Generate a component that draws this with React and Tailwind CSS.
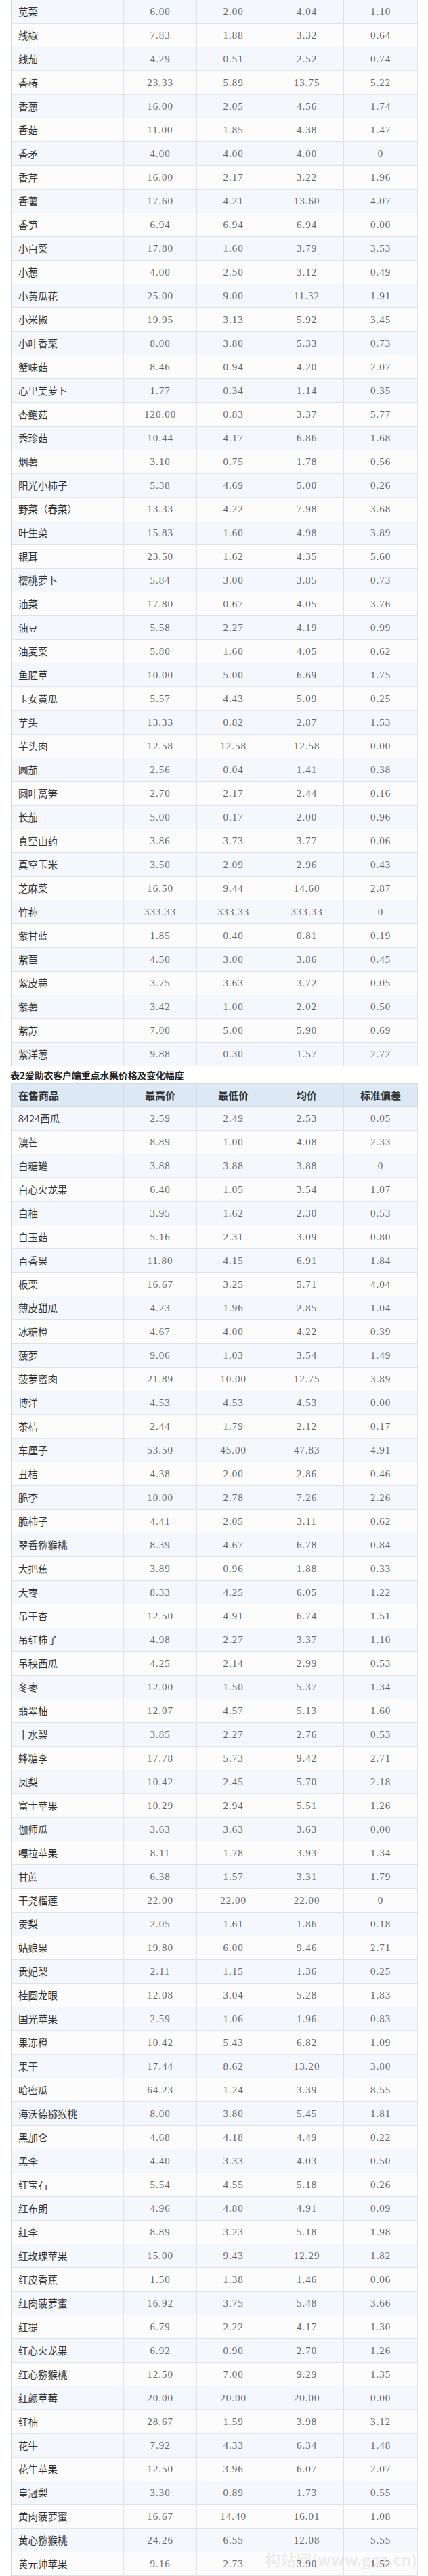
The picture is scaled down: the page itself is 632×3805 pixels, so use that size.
import React from "react";

const vegetables = [
  ["苋菜", "6.00", "2.00", "4.04", "1.10"],
  ["线椒", "7.83", "1.88", "3.32", "0.64"],
  ["线茄", "4.29", "0.51", "2.52", "0.74"],
  ["香椿", "23.33", "5.89", "13.75", "5.22"],
  ["香葱", "16.00", "2.05", "4.56", "1.74"],
  ["香菇", "11.00", "1.85", "4.38", "1.47"],
  ["香矛", "4.00", "4.00", "4.00", "0"],
  ["香芹", "16.00", "2.17", "3.22", "1.96"],
  ["香薯", "17.60", "4.21", "13.60", "4.07"],
  ["香笋", "6.94", "6.94", "6.94", "0.00"],
  ["小白菜", "17.80", "1.60", "3.79", "3.53"],
  ["小葱", "4.00", "2.50", "3.12", "0.49"],
  ["小黄瓜花", "25.00", "9.00", "11.32", "1.91"],
  ["小米椒", "19.95", "3.13", "5.92", "3.45"],
  ["小叶香菜", "8.00", "3.80", "5.33", "0.73"],
  ["蟹味菇", "8.46", "0.94", "4.20", "2.07"],
  ["心里美萝卜", "1.77", "0.34", "1.14", "0.35"],
  ["杏鲍菇", "120.00", "0.83", "3.37", "5.77"],
  ["秀珍菇", "10.44", "4.17", "6.86", "1.68"],
  ["烟薯", "3.10", "0.75", "1.78", "0.56"],
  ["阳光小柿子", "5.38", "4.69", "5.00", "0.26"],
  ["野菜（春菜）", "13.33", "4.22", "7.98", "3.68"],
  ["叶生菜", "15.83", "1.60", "4.98", "3.89"],
  ["银耳", "23.50", "1.62", "4.35", "5.60"],
  ["樱桃萝卜", "5.84", "3.00", "3.85", "0.73"],
  ["油菜", "17.80", "0.67", "4.05", "3.76"],
  ["油豆", "5.58", "2.27", "4.19", "0.99"],
  ["油麦菜", "5.80", "1.60", "4.05", "0.62"],
  ["鱼腥草", "10.00", "5.00", "6.69", "1.75"],
  ["玉女黄瓜", "5.57", "4.43", "5.09", "0.25"],
  ["芋头", "13.33", "0.82", "2.87", "1.53"],
  ["芋头肉", "12.58", "12.58", "12.58", "0.00"],
  ["圆茄", "2.56", "0.04", "1.41", "0.38"],
  ["圆叶莴笋", "2.70", "2.17", "2.44", "0.16"],
  ["长茄", "5.00", "0.17", "2.00", "0.96"],
  ["真空山药", "3.86", "3.73", "3.77", "0.06"],
  ["真空玉米", "3.50", "2.09", "2.96", "0.43"],
  ["芝麻菜", "16.50", "9.44", "14.60", "2.87"],
  ["竹荪", "333.33", "333.33", "333.33", "0"],
  ["紫甘蓝", "1.85", "0.40", "0.81", "0.19"],
  ["紫苣", "4.50", "3.00", "3.86", "0.45"],
  ["紫皮蒜", "3.75", "3.63", "3.72", "0.05"],
  ["紫薯", "3.42", "1.00", "2.02", "0.50"],
  ["紫苏", "7.00", "5.00", "5.90", "0.69"],
  ["紫洋葱", "9.88", "0.30", "1.57", "2.72"],
];

const fruits = [
  ["8424西瓜", "2.59", "2.49", "2.53", "0.05"],
  ["澳芒", "8.89", "1.00", "4.08", "2.33"],
  ["白糖罐", "3.88", "3.88", "3.88", "0"],
  ["白心火龙果", "6.40", "1.05", "3.54", "1.07"],
  ["白柚", "3.95", "1.62", "2.30", "0.53"],
  ["白玉菇", "5.16", "2.31", "3.09", "0.80"],
  ["百香果", "11.80", "4.15", "6.91", "1.84"],
  ["板栗", "16.67", "3.25", "5.71", "4.04"],
  ["薄皮甜瓜", "4.23", "1.96", "2.85", "1.04"],
  ["冰糖橙", "4.67", "4.00", "4.22", "0.39"],
  ["菠萝", "9.06", "1.03", "3.54", "1.49"],
  ["菠萝蜜肉", "21.89", "10.00", "12.75", "3.89"],
  ["博洋", "4.53", "4.53", "4.53", "0.00"],
  ["茶桔", "2.44", "1.79", "2.12", "0.17"],
  ["车厘子", "53.50", "45.00", "47.83", "4.91"],
  ["丑桔", "4.38", "2.00", "2.86", "0.46"],
  ["脆李", "10.00", "2.78", "7.26", "2.26"],
  ["脆柿子", "4.41", "2.05", "3.11", "0.62"],
  ["翠香猕猴桃", "8.39", "4.67", "6.78", "0.84"],
  ["大把蕉", "3.89", "0.96", "1.88", "0.33"],
  ["大枣", "8.33", "4.25", "6.05", "1.22"],
  ["吊干杏", "12.50", "4.91", "6.74", "1.51"],
  ["吊红柿子", "4.98", "2.27", "3.37", "1.10"],
  ["吊秧西瓜", "4.25", "2.14", "2.99", "0.53"],
  ["冬枣", "12.00", "1.50", "5.37", "1.34"],
  ["翡翠柚", "12.07", "4.57", "5.13", "1.60"],
  ["丰水梨", "3.85", "2.27", "2.76", "0.53"],
  ["蜂糖李", "17.78", "5.73", "9.42", "2.71"],
  ["凤梨", "10.42", "2.45", "5.70", "2.18"],
  ["富士苹果", "10.29", "2.94", "5.51", "1.26"],
  ["伽师瓜", "3.63", "3.63", "3.63", "0.00"],
  ["嘎拉苹果", "8.11", "1.78", "3.93", "1.34"],
  ["甘蔗", "6.38", "1.57", "3.31", "1.79"],
  ["干尧榴莲", "22.00", "22.00", "22.00", "0"],
  ["贡梨", "2.05", "1.61", "1.86", "0.18"],
  ["姑娘果", "19.80", "6.00", "9.46", "2.71"],
  ["贵妃梨", "2.11", "1.15", "1.36", "0.25"],
  ["桂圆龙眼", "12.08", "3.04", "5.28", "1.83"],
  ["国光苹果", "2.59", "1.06", "1.96", "0.83"],
  ["果冻橙", "10.42", "5.43", "6.82", "1.09"],
  ["果干", "17.44", "8.62", "13.20", "3.80"],
  ["哈密瓜", "64.23", "1.24", "3.39", "8.55"],
  ["海沃德猕猴桃", "8.00", "3.80", "5.45", "1.81"],
  ["黑加仑", "4.68", "4.18", "4.49", "0.22"],
  ["黑李", "4.40", "3.33", "4.03", "0.50"],
  ["红宝石", "5.54", "4.55", "5.18", "0.26"],
  ["红布朗", "4.96", "4.80", "4.91", "0.09"],
  ["红李", "8.89", "3.23", "5.18", "1.98"],
  ["红玫瑰苹果", "15.00", "9.43", "12.29", "1.82"],
  ["红皮香蕉", "1.50", "1.38", "1.46", "0.06"],
  ["红肉菠萝蜜", "16.92", "3.75", "5.48", "3.66"],
  ["红提", "6.79", "2.22", "4.17", "1.30"],
  ["红心火龙果", "6.92", "0.90", "2.70", "1.26"],
  ["红心猕猴桃", "12.50", "7.00", "9.29", "1.35"],
  ["红颜草莓", "20.00", "20.00", "20.00", "0.00"],
  ["红柚", "28.67", "1.59", "3.98", "3.12"],
  ["花牛", "7.92", "4.33", "6.34", "1.48"],
  ["花牛苹果", "12.50", "3.96", "6.07", "2.07"],
  ["皇冠梨", "3.30", "0.89", "1.73", "0.55"],
  ["黄肉菠萝蜜", "16.67", "14.40", "16.01", "1.08"],
  ["黄心猕猴桃", "24.26", "6.55", "12.08", "5.55"],
  ["黄元帅苹果", "9.16", "2.73", "3.90", "1.52"],
];

const cols = "grid grid-cols-[166px_108px_108px_109px_109px]";
const cjk = { fontFamily: '"Noto Sans CJK SC", "Noto Sans", sans-serif' };

function PriceRow({ row, index }) {
  const bg = index % 2 === 0 ? "bg-[#f4f8fd]" : "bg-[#fcfcfc]";
  return (
    <div className={`${cols} h-[35px] border-b border-[#dfe2e7] ${bg}`}>
      <div
        className="flex items-center pl-[10px] border-r border-[#dfe2e7] text-[14.5px] leading-[18px] text-[#333]"
        style={cjk}
      >
        {row[0]}
      </div>
      {row.slice(1).map((value, i) => (
        <div
          key={i}
          className="flex items-center justify-center border-r border-[#dfe2e7] font-['Liberation_Serif',serif] text-[15px] leading-[18px] tracking-[1px] text-[#666]"
        >
          {value}
        </div>
      ))}
    </div>
  );
}

function PriceTable({ rows, withHeader }) {
  return (
    <div className="ml-[16px] w-[601px] border-l border-[#d6dae0]">
      {withHeader && (
        <div
          className={`${cols} h-[35px] border-y border-[#d3dbe5] bg-[#dce9f5] text-[15px] leading-[18px] font-bold text-[#333]`}
          style={cjk}
        >
          <div className="flex items-center pl-[10px] border-r border-[#d3dbe5]">在售商品</div>
          <div className="flex items-center justify-center border-r border-[#d3dbe5]">最高价</div>
          <div className="flex items-center justify-center border-r border-[#d3dbe5]">最低价</div>
          <div className="flex items-center justify-center border-r border-[#d3dbe5]">均价</div>
          <div className="flex items-center justify-center border-r border-[#d3dbe5]">标准偏差</div>
        </div>
      )}
      {rows.map((row, index) => (
        <PriceRow key={row[0]} row={row} index={index} />
      ))}
    </div>
  );
}

export default function App() {
  return (
    <div className="relative w-[632px] h-[3805px] overflow-hidden bg-white">
      <PriceTable rows={vegetables} />
      <div
        className="h-[25px] ml-[15px] flex items-center text-[14px] leading-[16px] font-bold text-[#222] tracking-[-0.2px]"
        style={cjk}
      >
        表2爱助农客户端重点水果价格及变化幅度
      </div>
      <PriceTable rows={fruits} withHeader />
      <div
        className="absolute right-[16px] bottom-[12px] text-[23px] leading-[26px] font-bold text-[#000] opacity-[0.06] pointer-events-none"
        style={cjk}
      >
        构站网(www.goz.cn)
      </div>
    </div>
  );
}
